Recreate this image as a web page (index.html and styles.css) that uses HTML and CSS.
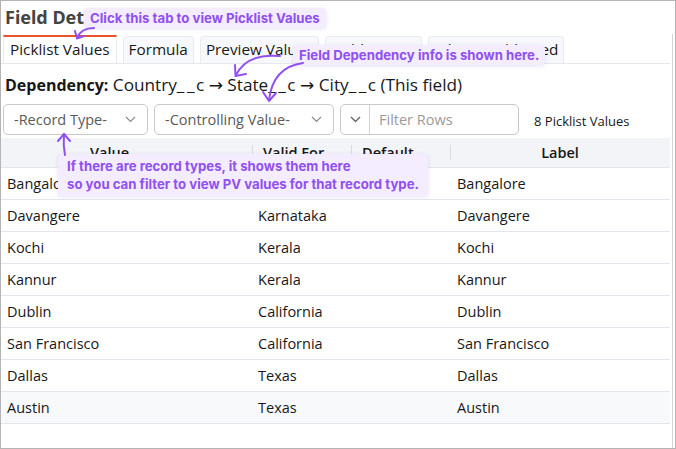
FILE: index.html
```html
<!DOCTYPE html>
<html>
<head>
<meta charset="utf-8">
<link rel="stylesheet" href="styles.css">
</head>
<body>
<div class="frame">
  <h1 class="title">Field Details: City__c</h1>
  <div class="panel">
    <div class="tabs">
      <div class="tab active">Picklist Values</div>
      <div class="tab">Formula</div>
      <div class="tab">Preview Values</div>
      <div class="tab">Field Access</div>
      <div class="tab">Where Field Used</div>
    </div>
    <div class="dep"><b>Dependency:</b> Country<span class="us">__</span>c <span class="ar">→</span> State<span class="us">__</span>c <span class="ar">→</span> City<span class="us">__</span>c (This field)</div>
    <div class="filters">
      <div class="select w1"><span>-Record Type-</span><svg class="chev" width="11" height="7" viewBox="0 0 11 7"><path d="M1 1 L5.5 5.5 L10 1" fill="none" stroke="#8a8a8a" stroke-width="1.2"/></svg></div>
      <div class="select w2"><span>-Controlling Value-</span><svg class="chev" width="11" height="7" viewBox="0 0 11 7"><path d="M1 1 L5.5 5.5 L10 1" fill="none" stroke="#8a8a8a" stroke-width="1.2"/></svg></div>
      <div class="filterbox">
        <div class="fbtn"><svg width="11" height="7" viewBox="0 0 11 7"><path d="M1 1 L5.5 5.5 L10 1" fill="none" stroke="#666" stroke-width="1.4"/></svg></div>
        <div class="finput">Filter Rows</div>
      </div>
      <div class="count">8 Picklist Values</div>
    </div>
    <div class="table">
      <div class="row head">
        <div class="c c1 hc1">Value</div>
        <div class="c c2 hd">Valid For</div>
        <div class="c c3 hd">Default</div>
        <div class="c c4 hd hc4">Label</div>
      </div>
      <div class="row"><div class="c c1">Bangalore</div><div class="c c2">Karnataka</div><div class="c c3"></div><div class="c c4">Bangalore</div></div>
      <div class="row"><div class="c c1">Davangere</div><div class="c c2">Karnataka</div><div class="c c3"></div><div class="c c4">Davangere</div></div>
      <div class="row"><div class="c c1">Kochi</div><div class="c c2">Kerala</div><div class="c c3"></div><div class="c c4">Kochi</div></div>
      <div class="row"><div class="c c1">Kannur</div><div class="c c2">Kerala</div><div class="c c3"></div><div class="c c4">Kannur</div></div>
      <div class="row"><div class="c c1">Dublin</div><div class="c c2">California</div><div class="c c3"></div><div class="c c4">Dublin</div></div>
      <div class="row"><div class="c c1">San Francisco</div><div class="c c2">California</div><div class="c c3"></div><div class="c c4">San Francisco</div></div>
      <div class="row"><div class="c c1">Dallas</div><div class="c c2">Texas</div><div class="c c3"></div><div class="c c4">Dallas</div></div>
      <div class="row hover"><div class="c c1">Austin</div><div class="c c2">Texas</div><div class="c c3"></div><div class="c c4">Austin</div></div>
    </div>
  </div>

  <div class="callout co1">Click this tab to view Picklist Values</div>
  <div class="callout co2">Field Dependency info is shown here.</div>
  <div class="callout co3">If there are record types, it shows them here<br>so you can filter to view PV values for that record type.</div>

  <svg class="arrows" width="676" height="449" viewBox="0 0 676 449">
    <g fill="none" stroke="#9150f0" stroke-width="2" stroke-linecap="round" stroke-linejoin="round">
      <path d="M93 27 Q80 27 76 37"/>
      <path d="M74 30 L76 37.5 L83 35"/>
      <path d="M279 55 Q246 52 235 74"/>
      <path d="M234 64 L234.5 75 L245 73"/>
      <path d="M302 62 Q272 66 268 99"/>
      <path d="M262 91 L268 100 L275 92"/>
      <path d="M64 154 Q62 144 63 133"/>
      <path d="M57 140 L63 133 L69 140"/>
    </g>
  </svg>
</div>
</body>
</html>
```

FILE: styles.css
```css
* { box-sizing: border-box; }
html, body { margin: 0; padding: 0; background: #fff; }
body { font-family: "Open Sans", "Noto Sans", sans-serif; color: #181818; }
.frame {
  width: 676px; height: 449px; border: 1px solid #b4b4b4;
  position: relative; overflow: hidden; background: #fff;
}
.title {
  margin: 0; padding: 5px 0 0 4px; height: 33px;
  font-family: "Noto Sans", sans-serif; font-size: 18px; font-weight: 700;
  color: #444; line-height: 22px;
}
.panel {
  width: 672px; height: 414px; border-right: 1px solid #d4d4d4;
}
.tabs {
  display: flex; gap: 6px; padding-left: 2px; height: 30px; align-items: flex-end;
  border-bottom: 1px solid #e6e8ec; margin-right: 2px;
}
.tab {
  height: 27px; padding: 0 5px; font-size: 15.3px; line-height: 25px;
  background: #f7f8fb; border: 1px solid #e8ebf0; border-bottom: none;
  border-radius: 4px 4px 0 0; color: #181818; white-space: nowrap;
}
.tab.active {
  background: #fff; border-top: 2px solid #e8532b; border-radius: 0;
  height: 28px; padding: 0 6px;
}
.dep { font-size: 17.2px; padding: 10px 0 0 4px; line-height: 22px; height: 39px; white-space: nowrap; }
.dep b { font-weight: 700; font-size: 16px; }
.dep .us { letter-spacing: 2.5px; margin-right: -1px; }
.dep .ar { font-family: "DejaVu Sans", sans-serif; font-size: 17px; }
.filters { display: flex; align-items: center; gap: 6px; padding-left: 2px; height: 32px; }
.select {
  height: 31px; border: 1px solid #c9c9c9; border-radius: 5px;
  display: flex; align-items: center; justify-content: space-between;
  padding: 0 11px 0 10px; color: #5a5a5a; font-size: 14.5px;
}
.w1 { width: 145px; }
.w2 { width: 180px; }
.filterbox {
  display: flex; height: 31px; border: 1px solid #c9c9c9; border-radius: 5px;
  width: 179px; margin-left: 0;
}
.fbtn { width: 29px; display: flex; align-items: center; justify-content: center; border-right: 1px solid #d4d4d4; }
.finput { padding-left: 9px; color: #9a9a9a; font-size: 14.5px; line-height: 29px; }
.count { font-size: 13px; margin-left: 9px; padding-top: 3px; color: #181818; }
.table { margin-top: 3px; margin-right: 2px; }
.row { display: flex; height: 32px; border-bottom: 1px solid #e3e6ec; font-size: 14.5px; line-height: 31px; }
.row.head { height: 30px; background: #f3f4f7; border-bottom: 1px solid #e3e6ec; font-weight: 600; line-height: 29px; }
.row.hover { background: #f8f9fb; }
.c { padding-left: 6px; white-space: nowrap; overflow: hidden; }
.c1 { width: 251px; }
.c2 { width: 99px; }
.c3 { width: 99px; }
.c4 { flex: 1; }
.hd { position: relative; padding-left: 11px; }
.hd::before {
  content: ""; position: absolute; left: 0; top: 7px; width: 1px; height: 15px; background: #d8dbe1;
}
.hc1 { text-align: center; padding-right: 40px; }
.hc4 { text-align: center; padding-left: 0; }
.c.c2:not(.hd) { padding-left: 6px; }
.c.c4:not(.hd) { padding-left: 7px; }

.callout {
  position: absolute; background: #f3edff; color: #9150f0;
  font-family: Inter, "Noto Sans", sans-serif; font-weight: 700; font-size: 13.2px;
  border-radius: 4px; box-shadow: 0 1px 4px rgba(120, 90, 180, 0.18);
  white-space: nowrap;
}
.co1 { left: 83px; top: 7px; padding: 2px 6px; line-height: 16px; }
.co2 { left: 292px; top: 44px; padding: 2px 6px; line-height: 16px; }
.co3 { left: 57px; top: 153px; padding: 3px 9px; line-height: 18px; }
.arrows { position: absolute; left: 0; top: 0; pointer-events: none; }
```
